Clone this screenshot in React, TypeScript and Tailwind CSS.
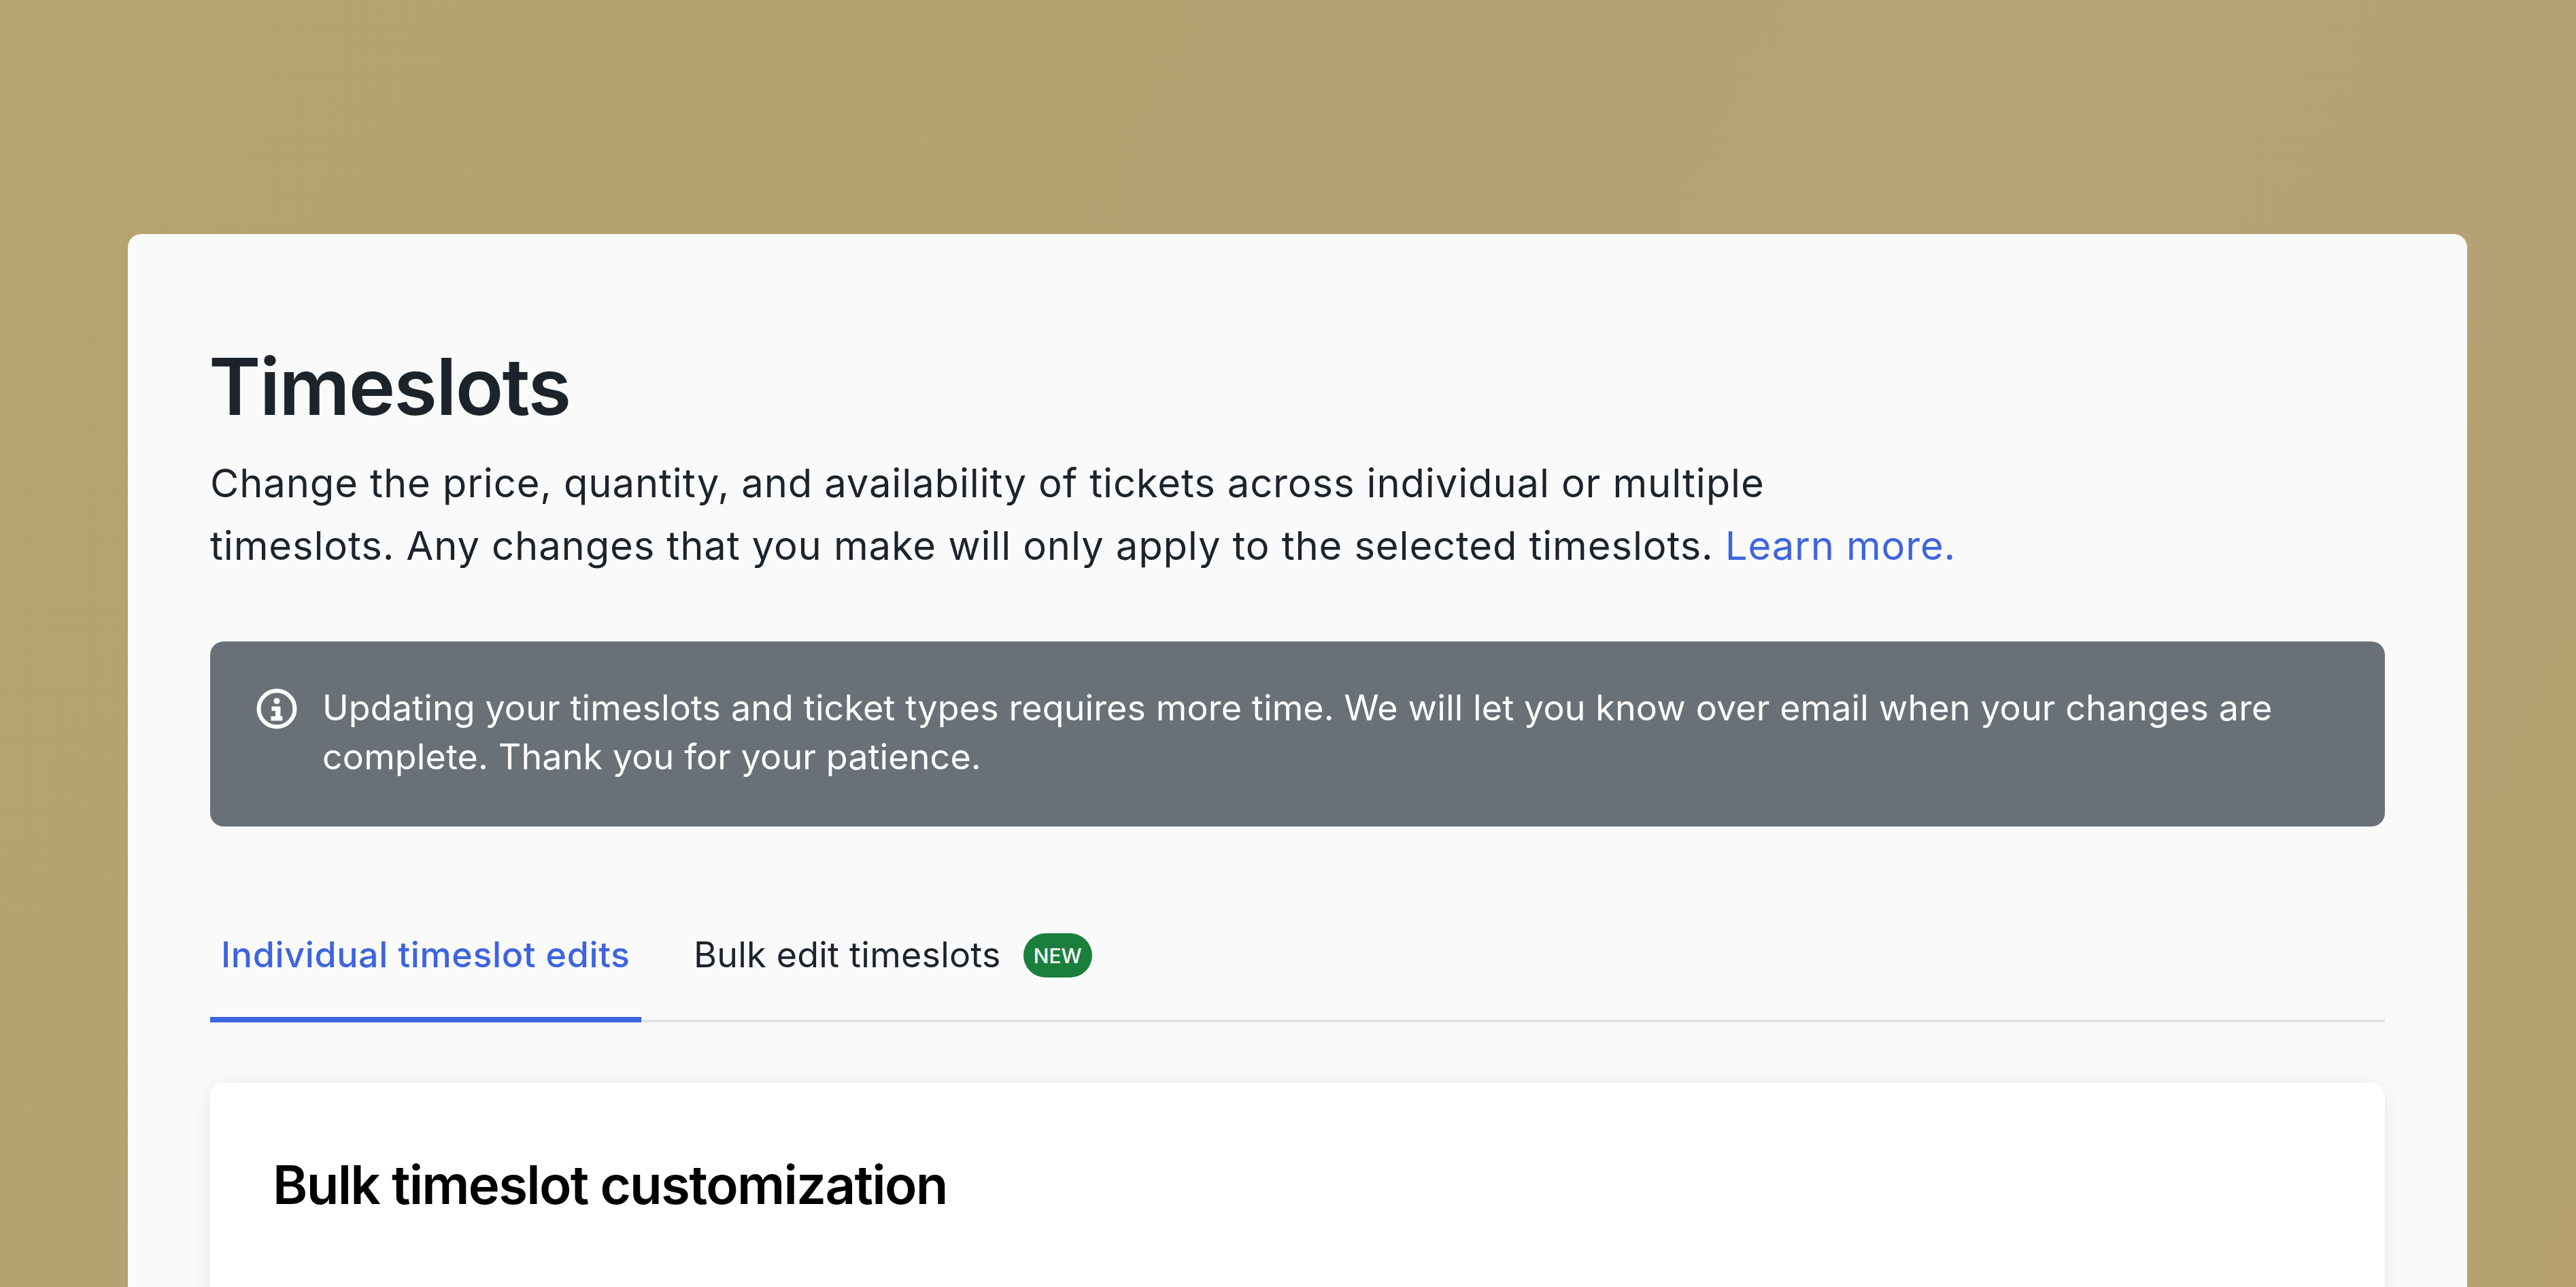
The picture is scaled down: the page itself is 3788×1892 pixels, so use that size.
const font = "font-['Inter','Noto_Sans',sans-serif]";

function InfoIcon() {
  return (
    <svg viewBox="0 0 60 60" className="w-[60px] h-[60px] shrink-0 mt-[7px]" fill="none">
      <circle cx="30" cy="30" r="26.5" stroke="#fff" strokeWidth="6" />
      <circle cx="30" cy="18.5" r="4.500" fill="#fff" />
      <path d="M22.500 26.500h11.500a1.500 1.500 0 0 1 1.500 1.500v13h3v6.500h-17V41h6.500v-8h-5.500z" fill="#fff" />
    </svg>
  );
}

export default function App() {
  return (
    <div className={`${font} w-[3788px] h-[1892px] overflow-hidden pt-[344px] pl-[188px] bg-[linear-gradient(115deg,#b7a36d_0%,#b5a272_40%,#b6a277_70%,#b5a06e_100%)]`}>
      <div className="w-[3440px] h-[1548px] bg-[#fafafa] rounded-t-[20px] px-[121px] pt-[154px]">
        {/* Header */}
        <h1 className="-ml-[2px] text-[116px] leading-[140px] font-semibold tracking-[-1.9px] text-[#1c232b]">Timeslots</h1>
        <p className="mt-[26px] text-[58px] leading-[92px] tracking-[0.84px] text-[#1c232b]">
          Change the price, quantity, and availability of tickets across individual or multiple
          <br />
          timeslots. Any changes that you make will only apply to the selected timeslots.{" "}
          <span className="text-[#3d64e0]">Learn more.</span>
        </p>

        {/* Notice */}
        <div className="mt-[95px] h-[272px] bg-[#697078] rounded-[20px] pl-[68px] pr-[120px] pt-[62px] flex gap-[37px] text-white">
          <InfoIcon />
          <p className="text-[52px] leading-[72px] tracking-[0.12px]">
            Updating your timeslots and ticket types requires more time. We will let you know over email when your changes are complete. Thank you for your patience.
          </p>
        </div>

        {/* Tabs */}
        <div className="mt-[120px] h-[168px] border-b-4 border-[#e0e2e5] flex">
          <div className="h-[168px] border-b-8 border-[#3d64e0] w-[634px] pl-[16px] pt-[33px] text-[52px] leading-[72px] font-medium tracking-[0.62px] text-[#3d64e0]">
            Individual timeslot edits
          </div>
          <div className="ml-[77px] pt-[33px] flex items-start text-[52px] leading-[72px] tracking-[0.22px] text-[#1c232b]">
            Bulk edit timeslots
            <span className="ml-[33px] mt-[4px] w-[101px] h-[65px] rounded-full bg-[#1a7f3c] flex items-center justify-center text-[30px] leading-none font-medium tracking-normal text-white">NEW</span>
          </div>
        </div>

        {/* Card */}
        <div className="mt-[89px] h-[400px] bg-white rounded-[20px] shadow-[0_4px_30px_rgba(0,0,0,0.08)] px-[92px] pt-[100px]">
          <h2 className="text-[78px] leading-[100px] font-semibold tracking-[-1.75px] text-black">Bulk timeslot customization</h2>
        </div>
      </div>
    </div>
  );
}
